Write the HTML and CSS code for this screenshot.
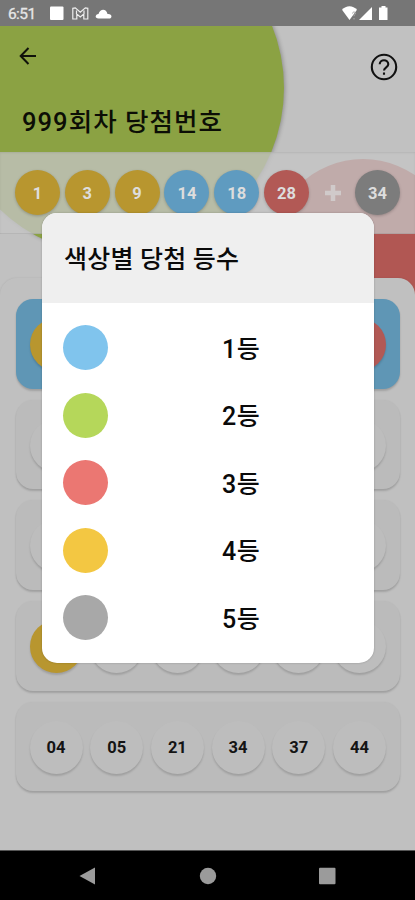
FILE: index.html
```
<!DOCTYPE html>
<html lang="ko">
<head>
<meta charset="utf-8">
<title>당첨번호</title>
<link rel="stylesheet" href="styles.css">
</head>
<body>
<div class="screen">
  <div class="blob green"></div>
  <div class="blob red-blob"></div>
  <header class="status">
    <span class="time">6:51</span>
    <svg class="status-left" width="64" height="16" viewBox="0 0 64 16" fill="#fff">
      <rect x="2" y="1.500" width="13.500" height="13.500" rx="1"/>
      <path d="M24.800 14V3.300l2.500-.5 5 4.300 5-4.300 2.500.5V14h-4V9l-3.500 3-3.500-3v5ZM28.500 5.500V9M36 5.500V9" fill="none" stroke="#eee" stroke-width="1.200"/>
      <path d="M50.500 13.500c-4.500 0-3-4.500 0-4.500 2-6 8-5 9 0 5-.5 5 4.500 1.500 4.500Z"/>
    </svg>
    <svg class="status-right" width="50" height="16" viewBox="0 0 50 16" fill="#fff">
      <path d="M3 4.800C7 0 14 0 18 4.800L10.500 15Z"/>
      <path d="M13.500 8.500c0-2 3-2 3 0 0 1-1.500 1-1.500 2.700M15 13v1.500" fill="none" stroke="#aaa" stroke-width="1"/>
      <path d="M20 15 33 2V15Z"/>
      <path d="M42.500 1h4v1.500h2V15H40V2.500h2.500Z"/>
    </svg>
  </header>
  <div class="appbar">
    <svg class="back" width="24" height="24" viewBox="0 0 24 24" fill="none" stroke="#10120a" stroke-width="2"><path d="M20 12H5M12.500 4 4.700 12l7.800 8"/></svg>
    <svg class="help" width="28" height="28" viewBox="0 0 28 28" fill="none" stroke="#111" stroke-width="2.100"><circle cx="14" cy="14" r="12.200"/><path d="M9.700 11.300c0-5.400 8.600-5.400 8.600 0 0 3-4.300 3-4.300 6.200M14 19.500v2.300"/></svg>
    <h1>999회차 당첨번호</h1>
  </div>
  <div class="winning">
    <span class="ball yellow">1</span><span class="ball yellow">3</span><span class="ball yellow">9</span><span class="ball blue">14</span><span class="ball blue">18</span><span class="ball red">28</span>
    <svg class="plus" width="41" height="18" viewBox="0 0 41 18"><path d="M22 1v16M14 9h16" stroke="#d0caca" stroke-width="4.500"/></svg>
    <span class="ball gray">34</span>
  </div>
  <main class="sheet">
    <div class="ticket hit"><i class="gold"></i><i></i><i></i><i></i><i></i><i class="coral"></i></div>
    <div class="ticket"><i></i><i></i><i></i><i></i><i></i><i></i></div>
    <div class="ticket"><i></i><i></i><i></i><i></i><i></i><i></i></div>
    <div class="ticket"><i class="gold"></i><i></i><i></i><i></i><i></i><i></i></div>
    <div class="ticket"><i>04</i><i>05</i><i>21</i><i>34</i><i>37</i><i>44</i></div>
  </main>
  <nav class="navbar">
    <svg width="18" height="18" viewBox="0 0 18 18"><path d="M.5 9 16 .5v17Z"/></svg>
    <svg width="18" height="18" viewBox="0 0 18 18"><circle cx="9" cy="9" r="8.200"/></svg>
    <svg width="18" height="18" viewBox="0 0 18 18"><rect x="1" y=".8" width="16.500" height="16.500" rx="1"/></svg>
  </nav>
  <section class="dialog">
    <h2>색상별 당첨 등수</h2>
    <ul>
      <li><b class="c1"></b><span>1등</span></li>
      <li><b class="c2"></b><span>2등</span></li>
      <li><b class="c3"></b><span>3등</span></li>
      <li><b class="c4"></b><span>4등</span></li>
      <li><b class="c5"></b><span>5등</span></li>
    </ul>
  </section>
</div>
</body>
</html>
```
FILE: styles.css
```
* { box-sizing: border-box; }
body { margin: 0; font-family: Roboto, "Noto Sans CJK KR", sans-serif; }
.screen {
  position: relative;
  isolation: isolate;
  width: 415px;
  height: 900px;
  overflow: hidden;
  display: flex;
  flex-direction: column;
  background: #c1c1c1;
}
.blob { position: absolute; z-index: -1; border-radius: 50%; }
.green { left: -52px; top: -80px; width: 336px; height: 336px; background: #8ba243; box-shadow: 1px 0 4px rgba(0,0,0,.28); }
.red-blob { left: 272px; top: 159px; width: 182px; height: 182px; background: #b15753; }

.status { height: 26px; flex: none; background: #767676; display: flex; align-items: center; padding: 0 26px 0 8px; }
.time { width: 40px; font-size: 15.500px; color: #e6e6e6; letter-spacing: -.6px; padding-top: 2px; -webkit-text-stroke: .3px #e6e6e6; }
.status-right { margin-left: auto; }

.appbar {
  height: 126px;
  flex: none;
  padding: 18px 17px 0 16px;
  display: grid;
  grid-template-columns: 24px 28px;
  grid-template-rows: 61px auto;
  justify-content: space-between;
}
.help { margin-top: 9px; }
h1 { grid-column: 1 / -1; width: 300px; margin: 0 0 0 6px; font-size: 25.500px; line-height: 34px; font-weight: 500; letter-spacing: 1.050px; color: #0c0e06; white-space: nowrap; }

.winning {
  height: 82px;
  flex: none;
  padding: 0 0 1px 15px;
  display: flex;
  align-items: center;
  gap: 4.800px;
  background: rgba(196,196,196,.77);
  box-shadow: inset 0 -1px 0 rgba(90,90,90,.12), inset 0 1px 2px rgba(0,0,0,.08);
}
.ball {
  width: 45px;
  height: 45px;
  flex: none;
  border-radius: 50%;
  display: flex;
  align-items: center;
  justify-content: center;
  padding-top: 2px;
  font-size: 16.500px;
  font-weight: 700;
  color: #ddd;
  box-shadow: 0 1px 3px rgba(0,0,0,.22);
}
.yellow { background: #b8962f; }
.blue { background: #5f9bc0; }
.red { background: #b25955; }
.gray { background: #7c7c7c; }
.plus { margin: 1px -1.500px 0 -3px; }

.sheet {
  flex: none;
  height: 572px;
  margin-top: 44px;
  padding: 21px 15px 0 16px;
  border-radius: 17px 17px 0 0;
  background: #c0c0c0;
  display: flex;
  flex-direction: column;
  gap: 11px;
  box-shadow: 0 0 2px rgba(0,0,0,.1);
}
.ticket {
  height: 89.700px;
  flex: none;
  padding: 1px 14px 0 13.500px;
  border-radius: 17px;
  display: flex;
  align-items: center;
  justify-content: space-between;
  background: #bbb;
  box-shadow: 0 2px 2px rgba(0,0,0,.16), 0 0 2px rgba(0,0,0,.04);
}
.ticket i {
  width: 53px;
  height: 53px;
  border-radius: 50%;
  display: flex;
  align-items: center;
  justify-content: center;
  background: #bdbdbd;
  font-style: normal;
  font-size: 16.500px;
  font-weight: 700;
  color: #141414;
  box-shadow: 0 2px 2px rgba(0,0,0,.15);
}
.ticket.hit { background: #5f96b5; }
.ticket .gold { background: #b8962f; }
.ticket .coral { background: #b25955; }

.navbar {
  height: 50px;
  flex: none;
  border-top: 1px solid #555;
  background: #000;
  display: flex;
  align-items: center;
  justify-content: space-between;
  padding: 0 79px;
  fill: #9b9b9b;
}

.dialog {
  position: absolute;
  left: 42px;
  top: 213px;
  width: 332px;
  height: 450px;
  border-radius: 15px;
  overflow: hidden;
  background: #fff;
  box-shadow: 0 0 2px rgba(0,0,0,.25);
}
h2 { height: 90px; margin: 0; padding: 0 0 2px 22px; display: flex; align-items: center; background: #efefef; font-size: 25px; letter-spacing: .2px; font-weight: 500; color: #0a0a0a; }
ul { list-style: none; margin: 0; padding: 22px 22px 0 21px; display: grid; gap: 22.500px; }
li { display: grid; grid-template-columns: 45px 1fr; height: 45px; align-items: center; }
li b { width: 45px; height: 45px; border-radius: 50%; }
li span { padding: 4px 0 0 114px; font-size: 25px; letter-spacing: .5px; line-height: 34px; font-weight: 500; color: #0a0a0a; }
.c1 { background: #80c4ed; }
.c2 { background: #b5d75a; }
.c3 { background: #eb7772; }
.c4 { background: #f3c742; }
.c5 { background: #a8a8a8; }
```
